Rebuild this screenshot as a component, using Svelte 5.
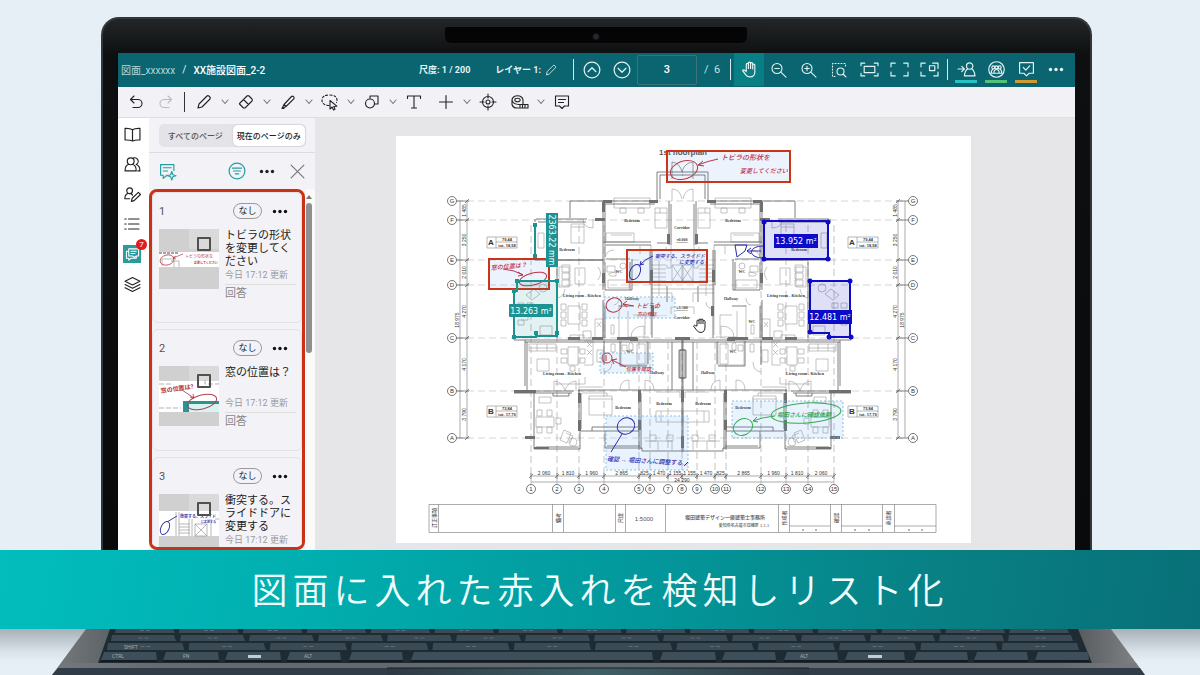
<script lang="ts">
  const comments = [
    { id: 1, title: 'トビラの形状を変更してください', date: '今日 17:12 更新', reply: '回答' },
    { id: 2, title: '窓の位置は？', date: '今日 17:12 更新', reply: '回答' },
    { id: 3, title: '衝突する。スライドドアに変更する', date: '今日 17:12 更新', reply: '' }
  ];

  const stroke = {
    undo: 'M6 2 2.500 5.500 6 9M2.500 5.500H10a4 4 0 0 1 0 8H5',
    redo: 'M10 2 13.500 5.500 10 9M13.500 5.500H6a4 4 0 0 0 0 8h5',
    pencil: 'M2 14l1-4 8-8q1-.8 2 .2l.8.8q1 1 .2 2l-8 8z',
    eraser: 'M1.500 9.500 9 2q1-.8 2 0l3 3q.8 1 0 2l-7 7H5.500L1.500 10zM5.500 5.500l5 5',
    marker: 'M4 10.500l7.500-8q1-.8 1.800 0l.5.5q.8 1 0 1.800L6 12.500zM4 10.500l-2 4 4-2M2 14.500h2',
    shape: 'M6 5V2h8v8h-3M10.500 9.500a4.500 4.500 0 1 1-9 0 4.500 4.500 0 0 1 9 0z',
    text: 'M1.500 4.500V2h13v2.500M8 2v12M5.500 14h5',
    plus: 'M8 1.500v13M1.500 8h13',
    target: 'M13.500 8a5.500 5.500 0 1 1-11 0 5.500 5.500 0 0 1 11 0zM10 8a2 2 0 1 1-4 0 2 2 0 0 1 4 0zM8 0v4M8 12v4M0 8h4M12 8h4',
    tape: 'M0 6a5.500 4.200 0 0 1 11 0v4.500M0 6v4.500q1 3.500 5 3.500h11v-3.500H7Q1 10.500 0 6M2.800 6a2.700 1.800 0 1 0 5.400 0 2.700 1.800 0 1 0-5.400 0M8 11v2M10.500 11v2M13 11v2',
    comment: 'M1.500 2h13v10h-4L8 14.500 5.500 12h-4zM4.500 5.500h7M4.500 8.500h5',
    up: 'M15 8A7 7 0 1 1 1 8a7 7 0 0 1 14 0zM4.500 9.500 8 6l3.500 3.500',
    down: 'M15 8A7 7 0 1 1 1 8a7 7 0 0 1 14 0zM4.500 6.500 8 10l3.500-3.500',
    hand: 'M5 9V3.200a1 1 0 0 1 2 0V7M7 7V2a1 1 0 0 1 2 0v5M9 7V2.500a1 1 0 0 1 2 0V7.500M11 7V4a1 1 0 0 1 2 0v6q0 5-4.500 5-2.500 0-4-2L1.500 9q.8-1.200 2-.3L5 10',
    zoomout: 'M11 6.500a5 5 0 1 1-10 0 5 5 0 0 1 10 0zM9.800 10.200 15 15.200M3.800 6.500h4.500',
    zoomin: 'M11 6.500a5 5 0 1 1-10 0 5 5 0 0 1 10 0zM9.800 10.200 15 15.200M3.800 6.500h4.500M6 4.200v4.500',
    fit: 'M0 4.500V2h3.500M12.500 2H16v2.500M16 11.500V14h-3.500M3.500 14H0v-2.500M3 5h10v6H3z',
    full: 'M0 5.500V2h4M12 2h4v3.500M16 10.500V14h-4M4 14H0v-3.500',
    window: 'M0 5.500V2h4M16 10.500V14h-4M4 14H0v-3.500M8 4.500h5V9H8zM11 2h5v5',
    enter: 'M14 4.800a3 3 0 1 1-6 0 3 3 0 0 1 6 0zM9 7.500Q6.500 9 6 14h10q-.5-5-3-6.500M0 7.500h5.500M3.500 5l2.500 2.500L3.500 10',
    check: 'M1.500 1.500h13v10h-4L8 14 5.500 11.500h-4zM5 6l2.300 2.500L11 4.500',
    book: 'M8 3.500Q6 2 1 2.200v11Q6 13 8 14.200q2-1.200 7-1v-11Q10 2 8 3.500zv10.500',
    users: 'M9.500 5a3.200 3.200 0 1 1-6.400 0 3.200 3.200 0 0 1 6.400 0zM4 8Q1 9 1 14h10.500q0-5-3-6M8.500 2a3.200 3.200 0 1 1 3 6Q15 9 15 14h-2',
    userpen: 'M8 4.500a2.700 2.700 0 1 1-5.400 0 2.700 2.700 0 0 1 5.400 0zM3.500 7Q.8 8 .8 12h4.500M7 7.500l1 1M7 14.500l.7-3L13.500 6l2 2-6 5.800z',
    list: 'M4.500 3H15M4.500 8H15M4.500 13H15M.8 3h1.400M.8 8h1.400M.8 13h1.400',
    layers: 'M8 1.500 15 5 8 8.500 1 5zM1 8l7 3.500L15 8M1 11l7 3.500 7-3.500',
    chat: 'M3 4.500H1.500V12H4v2l2.500-2H12v-1.500M4 2h10.500v7.500H12L10 11 8 9.500H4zM6.500 4.500h5.500M6.500 7h4',
    spark: 'M14 7V1.500H1.500v10H4v3L7.500 11.500M4 4.500h7.500M4 7.500h4M12 8l1 3 3 1-3 1-1 3-1-3-3-1 3-1z',
    filter: 'M15 8A7 7 0 1 1 1 8a7 7 0 0 1 14 0zM4 5.500h8M5 8h6M6.500 10.500h3',
    close: 'M2 2l12 12M14 2 2 14'
  };

  const axisRows = [
    { n: 'G', y: 201 }, { n: 'F', y: 220 }, { n: 'E', y: 260 }, { n: 'D', y: 285 },
    { n: 'C', y: 338 }, { n: 'B', y: 391 }, { n: 'A', y: 438 }
  ];
  const rowDims = ['1 485', '3 250', '2 010', '4 270', '4 170', '3 790'];
  const axisCols = [531, 557, 579, 604, 639, 650, 668, 682, 697, 715, 726, 761, 786, 808, 834];
  const colDims = ['2 060', '1 810', '1 960', '2 865', '825', '1 470', '1 155', '1 155', '1 470', '825', '2 865', '1 960', '1 810', '2 060'];
  const mid = (list: number[], i: number) => (list[i] + list[i + 1]) / 2;

  const roomNames = [
    ['Bedroom', 632, 222], ['Bedroom', 567, 251], ['Living room - Kitchen', 582, 297], ['WC', 619, 273],
    ['Corridor', 682, 229], ['Corridor', 682, 319], ['Hallway', 632, 300], ['Bedroom', 733, 222], ['Bedroom', 799, 251],
    ['WC', 742, 273], ['Hallway', 731, 300], ['Living room - Kitchen', 786, 297], ['WC', 752, 323],
    ['Living room - Kitchen', 562, 375], ['Living room - Kitchen', 805, 375], ['Hallway', 657, 374], ['Hallway', 708, 374],
    ['Bedroom', 623, 409], ['Bedroom', 664, 405], ['Bedroom', 703, 405], ['Bedroom', 743, 409], ['WC', 630, 353], ['WC', 733, 353]
  ];
  const infoBoxes = [
    { n: 'A', x: 487, y: 237, a: '79,44', b: 'tot. 18,58' }, { n: 'A', x: 848, y: 237, a: '79,44', b: 'tot. 18,58' },
    { n: 'B', x: 487, y: 406, a: '73,84', b: 'tot. 17,79' }, { n: 'B', x: 848, y: 406, a: '73,84', b: 'tot. 17,79' }
  ];

  // Keyboard rows: top edge, height, left and right end, number of keys
  const keyRows = [
    { y: 628, h: 5, x0: 116, x1: 1074, n: 15 },
    { y: 635, h: 6, x0: 112, x1: 1078, n: 14 },
    { y: 643, h: 7, x0: 108, x1: 1084, n: 12 }
  ];
  const bottomKeys = [[104, 52], [166, 52], [228, 52], [290, 50], [352, 50], [414, 238], [663, 52], [725, 50], [787, 50], [848, 56], [917, 50], [977, 50], [1038, 50]];
</script>

{#snippet icon(d: string, size: number)}
  <svg class="ic" width={size} height={size} viewBox="0 0 16 16" aria-hidden="true"><path {d} /></svg>
{/snippet}
{#snippet tool(d: string, label: string, menu: boolean)}
  <button class="tool" aria-label={label}>{@render icon(d, 16)}</button>
  {#if menu}
    <button class="chev" aria-label="{label}のメニュー">
      <svg class="ic" width="8" height="6" viewBox="0 0 8 6" aria-hidden="true"><path d="M1 1l3 3.500L7 1" /></svg>
    </button>
  {/if}
{/snippet}
{#snippet dots(size: number)}
  <svg class="dots" width={size} height="5" viewBox="0 0 15 5" aria-hidden="true">
    <circle cx="2" cy="2.500" r="1.700" /><circle cx="7.500" cy="2.500" r="1.700" /><circle cx="13" cy="2.500" r="1.700" />
  </svg>
{/snippet}

<main class="stage">
  <div class="lid">
    <div class="camera"></div>
    <div class="screen">
      <header class="topbar">
        <nav class="crumbs"><a href="#folder">図面_xxxxxx</a><span>/</span><strong>XX施設図面_2-2</strong></nav>
        <span class="meta scale">尺度: 1 / 200</span>
        <span class="meta layer">レイヤー 1:</span>
        <button class="edit" aria-label="レイヤー名を編集">{@render icon(stroke.pencil, 12)}</button>
        <i class="rule"></i>
        <button class="top" aria-label="前のページ">{@render icon(stroke.up, 18)}</button>
        <button class="top" aria-label="次のページ">{@render icon(stroke.down, 18)}</button>
        <input class="page" aria-label="ページ番号" value="3" />
        <span class="total">/&nbsp; 6</span>
        <i class="rule"></i>
        <button class="top active" aria-label="手のひら">{@render icon(stroke.hand, 17)}</button>
        <button class="top" aria-label="縮小">{@render icon(stroke.zoomout, 16)}</button>
        <button class="top" aria-label="拡大">{@render icon(stroke.zoomin, 16)}</button>
        <button class="top" aria-label="範囲を拡大">
          <svg class="ic" width="16" height="16" viewBox="0 0 16 16" aria-hidden="true">
            <path stroke-dasharray="1 2" d="M4 14.500H1.500V1.500h13V5" />
            <path d="M13 9.500a3.500 3.500 0 1 1-7 0 3.500 3.500 0 0 1 7 0zM12 12l3 3" />
          </svg>
        </button>
        <button class="top" aria-label="幅に合わせる">{@render icon(stroke.fit, 17)}</button>
        <button class="top" aria-label="全画面">{@render icon(stroke.full, 17)}</button>
        <button class="top" aria-label="別ウィンドウ">{@render icon(stroke.window, 17)}</button>
        <i class="rule"></i>
        <button class="top mark cyan" aria-label="参加">{@render icon(stroke.enter, 17)}</button>
        <button class="top mark green" aria-label="メンバー">
          <svg class="ic" width="17" height="17" viewBox="0 0 16 16" aria-hidden="true">
            <circle cx="8" cy="8" r="7.300" />
            <path d="M3 11.500q0-3 1.500-3.500M13 11.500q0-3-1.500-3.500M5.500 11.500q0-3.500 2.500-3.500t2.500 3.500zM3 11.500h10" />
            <circle cx="5" cy="6" r="1.400" /><circle cx="8" cy="6" r="1.400" /><circle cx="11" cy="6" r="1.400" />
          </svg>
        </button>
        <button class="top mark amber" aria-label="確認">{@render icon(stroke.check, 17)}</button>
        <button class="top" aria-label="その他">{@render dots(16)}</button>
      </header>

      <div class="tools">
        <div class="history">
          <button class="tool" aria-label="元に戻す">{@render icon(stroke.undo, 16)}</button>
          <button class="tool off" aria-label="やり直す">{@render icon(stroke.redo, 16)}</button>
        </div>
        <i class="rule"></i>
        {@render tool(stroke.pencil, 'ペン', true)}
        {@render tool(stroke.eraser, '消しゴム', true)}
        {@render tool(stroke.marker, 'マーカー', true)}
        <button class="tool" aria-label="選択">
          <svg class="ic" width="18" height="17" viewBox="0 0 18 17" aria-hidden="true">
            <path stroke-dasharray="2 2" d="M8 11.500Q1 11 1 6.300 1 1 8.500 1 16 1 16 6.500q0 1-.5 2" />
            <path d="M9 6.500V15l2.200-2 1.300 3 1.500-.7-1.200-2.800 3-.3z" />
          </svg>
        </button>
        <button class="chev" aria-label="選択のメニュー">
          <svg class="ic" width="8" height="6" viewBox="0 0 8 6" aria-hidden="true"><path d="M1 1l3 3.500L7 1" /></svg>
        </button>
        {@render tool(stroke.shape, '図形', true)}
        {@render tool(stroke.text, 'テキスト', false)}
        <i class="gap"></i>
        {@render tool(stroke.plus, '追加', true)}
        {@render tool(stroke.target, '位置', false)}
        <i class="gap"></i>
        {@render tool(stroke.tape, '計測', true)}
        {@render tool(stroke.comment, 'コメント', false)}
      </div>

      <div class="work">
        <nav class="rail">
          <button aria-label="ページ">{@render icon(stroke.book, 17)}</button>
          <button aria-label="メンバー">{@render icon(stroke.users, 17)}</button>
          <button aria-label="編集者">{@render icon(stroke.userpen, 17)}</button>
          <button aria-label="一覧">{@render icon(stroke.list, 16)}</button>
          <button aria-label="コメント"><span class="on">{@render icon(stroke.chat, 15)}<b>7</b></span></button>
          <button aria-label="レイヤー">{@render icon(stroke.layers, 17)}</button>
        </nav>

        <aside class="panel">
          <div class="tabs">
            <div class="segment"><button>すべてのページ</button><button class="sel">現在のページのみ</button></div>
          </div>
          <div class="actions">
            <button class="teal" aria-label="コメントを追加">{@render icon(stroke.spark, 17)}</button>
            <span class="grow"></span>
            <button class="teal" aria-label="絞り込み">{@render icon(stroke.filter, 18)}</button>
            <button aria-label="その他">{@render dots(16)}</button>
            <button class="close" aria-label="閉じる">{@render icon(stroke.close, 17)}</button>
          </div>
          <div class="listwrap">
            <div class="list">
              {#each comments as c (c.id)}
                <article>
                  <div class="head"><span class="num">{c.id}</span><span class="pill">なし</span><button aria-label="コメント{c.id}の操作">{@render dots(16)}</button></div>
                  <div class="body">
                    <div class="thumb">
                      <svg viewBox="0 0 60 60" aria-hidden="true">
                        <rect width="60" height="60" fill="#d0d0d1" /><path d="M30 0h30v20H30z" fill="#dadadb" />
                        {#if c.id === 1}
                          <path d="M0 23h60v15H0z" fill="#fff" />
                          <path d="M0 24h20" stroke="#888" stroke-dasharray="3 1" stroke-width="1.500" />
                          <path d="M3 37v-7h12v-3M12 32h8v6M15 32v6" fill="none" stroke="#aaa" stroke-width=".8" />
                          <ellipse cx="8" cy="31" rx="7" ry="5" fill="none" stroke="#b5424f" stroke-width=".8" transform="rotate(-15 8 31)" />
                          <path d="M14 29l10-4M14 29l3-2M14 29l3 1" stroke="#b5424f" stroke-width=".7" />
                          <text x="26" y="29" font-size="4" fill="#bb3f48">トビラの形状を</text>
                          <text x="35" y="35" font-size="3" font-weight="700" fill="#bb3f48">変更してください</text>
                        {:else if c.id === 2}
                          <path d="M0 15h60v31H0z" fill="#fff" />
                          <path d="M0 18h14M0 42h22M46 14v4h14v-3" stroke="#aaa" stroke-width=".9" fill="none" stroke-dasharray="5 2" />
                          <path d="M29 37h31v9H29z" fill="#d9f2f2" /><path d="M24 35h36v3H30v8h-6z" fill="#2a9493" />
                          <text x="2" y="27" font-size="6" font-weight="700" fill="#b82f3b" transform="rotate(-8 2 27)">窓の位置は?</text>
                          <ellipse cx="43" cy="36" rx="15" ry="7" fill="none" stroke="#b5424f" transform="rotate(-15 43 36)" />
                          <path d="M23 24l12 8M35 32l-4-1M35 32l-1-4" stroke="#b5424f" stroke-width=".9" />
                        {:else}
                          <path d="M0 17h60v25H0z" fill="#fff" />
                          <path d="M17 18v24M20 18v24M30 25v17M33 25v17M20 30h11M20 33h11M20 36h11M20 39h11M36 30h12v12H36zM36 30l12 12M48 30 36 42M52 25v17M56 25h4" fill="none" stroke="#999" stroke-width=".7" />
                          <ellipse cx="6" cy="34" rx="4" ry="7" fill="none" stroke="#3d3aa5" transform="rotate(25 6 34)" />
                          <path d="M8 28l10-6" stroke="#3d3aa5" />
                          <text x="21" y="24" font-size="4" font-weight="700" fill="#3d3aa5">衝突する、スライド</text>
                          <text x="42" y="29" font-size="3" font-weight="700" fill="#3d3aa5">に変更する</text>
                        {/if}
                      </svg>
                      <input type="checkbox" aria-label="コメント{c.id}を選択" />
                    </div>
                    <div class="txt">
                      <p>{c.title}</p><time>{c.date}</time>
                      {#if c.reply}<a href="#reply{c.id}">{c.reply}</a>{/if}
                    </div>
                  </div>
                </article>
              {/each}
            </div>
            <div class="scroll"><i class="arrow"></i><i class="thumbbar"></i></div>
          </div>
        </aside>

        <section class="canvas">
          <svg class="paper" viewBox="396 136 575 407" role="img" aria-label="1st floorplan">
            <defs>
              <g id="half" fill="none" stroke="#606060" stroke-width=".8">
                <g stroke="#9a9a9a" stroke-width=".6">
                  <path d="M571 224h13v19h-13zM571 227h13M538 233h6v15h-6zM570 338v-3h14v3M585 377v7h-30" />
                  <path d="M559 267h10v20h-10zM562 265h8v7h-8zM562 273h8v6h-8zM562 280h8v6h-8zM575 268h10v16h-10z" />
                  <path d="M568 306h12v18h-12zM561 304h5v6h-5zM561 312h5v6h-5zM561 320h5v6h-5zM582 304h5v6h-5zM582 312h5v6h-5zM582 320h5v6h-5z" />
                  <path d="M595 319h8v19h-8zM597 322l4 5M601 322l-4 5M583 331h8v7h-8zM598 267q5 6 0 13" />
                  <path d="M606 233h28v9h-28zM611 235h21M655 208h12v20h-12zM655 213h12M660 208v5M620 208h6v5h-6zM638 208h6v5h-6zM614 198h36v10h-36z" />
                  <path d="M607 266h8v6h-8zM608 280h21v8h-21zM611 273q-5 1 0 3h5v-4z" /><circle cx="623" cy="266" r="3" />
                  <path d="M628 311v26h21M633 315h12v20M619 305v33M604 305v33M611 325h3v9h-3z" />
                  <path d="M529 344h27v7h-27zM529 348h27M537 344v7M547 344v7M537 359h12v12h-12zM568 347h10v18h-10zM561 349h6v5h-6zM561 358h6v5h-6zM580 349h5v5h-5zM580 358h5v5h-5zM570 366h5v5h-5z" />
                  <path d="M584 341h9v24h-9M587 342l5 5M592 342l-5 5M587 350l5 5M592 350l-5 5M597 350h6v12h-6z" />
                  <path d="M621 341v24h26v-24M637 344h8v20h-8zM622 345h5v6h-5zM629 344q1-3 4 0v6h-4zM611 344h4v8h-4z" />
                  <path d="M589 396h23v19h-23zM582 393h25v3M588 399h25M539 397h12v6h-12zM536 417h18v10h-18zM537 410h5v6h-5zM547 410h5v6h-5zM537 427h5v6h-5zM547 427h5v6h-5zM556 418h5v6h-5z" />
                  <path d="M564 430l7 3-4 10-7-3zM566 433l7 3-3 7" /><circle cx="573" cy="442" r="4" />
                  <path d="M656 411h26v11h-26zM661 411v11M656 392h24v6M645 441h27v9M658 441v9M650 435h6v6h-6zM667 435h6v6h-6zM605 391h-26v-4h24" />
                  <path d="M521 320h7v-6M518 303h6v5h-6zM527 303h6v5h-6zM518 320h6v5h-6zM540 326h12v9h-12z" />
                  <path d="M526 295l8-6 6 5-8 6z" /><circle cx="543" cy="288" r="4" />
                  <path d="M583 219q0 9 10 9v-9M604 262q1-12 10-12M557 298q7-1 8-9M631 338q0-12 13-12v12M651 308q7 2 8-6M604 372q8-1 8-10M620 390q0-10 9-10v10M645 390v-10q9 1 9 10" />
                  <path d="M554 391v-10q9 1 11 10q2-9 11-10v10M672 201v-12q8 0 10 10M640 246v8M614 305q5-1 5-7" />
                  <path d="M651 245v90M671 245v23h-4v-3M666 250v-3M651 265h15M651 269h15M651 273h15M651 277h15M651 281h15M651 285h15M651 289h15M651 293h15M659 261v35M672 265h11v16h-11zM672 265l11 16M672 281l11-16" />
                  <path d="M667 289h16M667 293h5v9M682 307h-11v7" />
                </g>
                <path d="M657 201v-29h26M660 199v-24h23M570 218v-17h87M604 204h51M536 219h51M535 219v3M538 222h48M535 258v2h68M603 201v57M605 204v53M557 262v76M557 260h46M603 242h48M606 245h45M657 243h13M669 201v44M671 204v41" />
                <path d="M603 258v32M605 262v28M630 262v28M605 290h27M632 259v31M606 259h24M650 250v35M652 250v88M667 286v16M603 300v38M605 306v32M619 306h14M514 337v3h169M525 342h158" />
                <path d="M527 342v49M525 340v46M514 391h60M514 393h58M553 393v3h16v-3M534 393v56h46v-18M536 447h42M579 390v40M581 393v36M581 431h58M592 427h47M592 431v-4M578 390h104M639 390v60M641 393v56M605 431v17h37v3h40M607 446h33" />
                <path d="M604 341v24M620 341v25h27M648 342v22M672 342v48M680 350h6v28h-6zM682 340v112" />
                <g fill="#707070" stroke="none">
                  <path d="M603 200h9v3h-9zM649 200h9v3h-9zM595 218h10v3h-10zM568 337h12v3h-12zM592 337h11v3h-11zM617 337h20v3h-20zM602 202h3v10h-3zM667 234h3v10h-3zM602 273h3v10h-3zM650 270h3v12h-3zM630 338h8v3h-8zM651 306h3v10h-3zM514 390h22v3h-22zM578 393h3v10h-3zM578 420h3v11h-3zM638 390h3v12h-3zM638 420h3v10h-3zM681 390h3v12h-3zM681 436h3v12h-3zM525 436h10v3h-10zM534 449h15v-2h-15zM680 337h10v3h-10z" />
                </g>
              </g>
            </defs>

            <rect x="396" y="136" width="575" height="407" fill="#fff" />
            <g fill="none" stroke="#aaa" stroke-width=".7">
              <g stroke-dasharray="7 4">
                {#each axisRows as r}<path d="M456 {r.y}H908" stroke="#c4c4c4" />{/each}
                {#each axisCols as x, i}<path d="M{x} {i < 4 || i > 10 ? 225 : 342}V484" />{/each}
              </g>
              <path d="M460 201V438M467 201V438M898 201V438M905 201V438M531 476H834M531 482H834" stroke="#888" />
              {#each axisRows as r}
                <path d="M465 {r.y + 2}l4-4M896 {r.y + 2}l4-4M457 {r.y}h12M896 {r.y}h12" stroke="#555" />
              {/each}
              {#each axisCols as x}<path d="M{x - 2} 478l4-4M{x} 473v6" stroke="#555" />{/each}
            </g>
            <use href="#half" />
            <use href="#half" transform="translate(1365 0) scale(-1 1)" />

            <g class="axis">
              {#each axisRows as r}
                {#each [452, 913] as x}
                  <circle cx={x} cy={r.y} r="4.500" /><text {x} y={r.y + 2}>{r.n}</text>
                {/each}
              {/each}
              {#each axisCols as x, i}<circle cx={x} cy="489" r="4.500" /><text {x} y="491">{i + 1}</text>{/each}
            </g>
            <g class="dim">
              {#each rowDims as d, i}
                {@const y = (axisRows[i].y + axisRows[i + 1].y) / 2}
                <text transform="translate(466 {y}) rotate(-90)">{d}</text>
                <text transform="translate(897 {y}) rotate(-90)">{d}</text>
              {/each}
              <text transform="translate(459 320) rotate(-90)">18 975</text>
              <text transform="translate(904 320) rotate(-90)">18 975</text>
              {#each colDims as d, i}<text x={mid(axisCols, i)} y="475">{d}</text>{/each}
              <text x="682" y="482">24 290</text>
            </g>
            <g class="room">
              {#each roomNames as [n, x, y]}<text {x} {y}>{n}</text>{/each}
              <text x="682" y="241" text-decoration="underline">±0.000</text>
              <text x="682" y="309" text-decoration="underline">+1.500</text>
            </g>
            {#each infoBoxes as b}
              <g class="info">
                <path d="M{b.x} {b.y}h30v11h-30zM{b.x + 9} {b.y}v11M{b.x + 9} {b.y + 5}h21" />
                <text x={b.x + 4} y={b.y + 8} class="big">{b.n}</text>
                <text x={b.x + 20} y={b.y + 4}>{b.a}</text><text x={b.x + 20} y={b.y + 10}>{b.b}</text>
              </g>
            {/each}
            <text x="683" y="155" class="planname">1st floorplan</text>

            <g class="selection">
              <path d="M604 297h71v21h-71zM600 353h53v20h-53zM606 416h82v54h-82zM732 401h111v37H732z" />
            </g>
            <g class="redbox">
              <rect x="667" y="151" width="123" height="31" />
              <rect x="489" y="259" width="60" height="30" />
              <rect x="627" y="250" width="80" height="32" />
            </g>
            <g class="ink red">
              <ellipse cx="684" cy="170" rx="14" ry="9" transform="rotate(-18 684 170)" />
              <path d="M718 159q-10 2-20 6M698 165l5-4M698 165l6 1" />
              <path d="M672 179v-17q8 1 10 10q2-9 11-10v17" stroke="#777" stroke-width=".7" />
              <path d="M503 269q12 1 20 6M523 275l-5-3M523 275l-5 1" />
              <ellipse cx="533" cy="279" rx="14" ry="6" transform="rotate(-15 533 279)" />
              <ellipse cx="614" cy="305" rx="8" ry="7" transform="rotate(-20 614 305)" />
              <path d="M634 306l-11-2M623 304l4-3M623 304l4 3" />
              <ellipse cx="607" cy="358" rx="5" ry="5" /><path d="M606 355v6M626 367l-14-7M612 360l5-1M612 360l2 4" />
              <text x="721" y="160" font-size="7">トビラの形状を</text>
              <text x="740" y="173" font-size="6">変更してください</text>
              <text x="491" y="270" font-size="6" transform="rotate(-5 491 270)">窓の位置は？</text>
              <text x="636" y="308" font-size="6">トビラの</text>
              <text x="637" y="316" font-size="5">方向修正……</text>
              <text x="626" y="371" font-size="5">位置を確認</text>
            </g>
            <g class="ink blue">
              <ellipse cx="635" cy="272" rx="5" ry="8" transform="rotate(25 635 272)" /><path d="M653 256q-8 3-13 9M640 265l1-4M640 265l4-1" />
              <text x="655" y="258" font-size="5">衝突する、スライドド</text>
              <text x="679" y="264" font-size="5">に変更する</text>
              <ellipse cx="626" cy="426" rx="9" ry="8" transform="rotate(-30 626 426)" /><path d="M622 434l-11 18" />
              <text x="607" y="461" font-size="6" transform="rotate(3 607 461)">確認 → 堀田さんに調整する…</text>
              <path d="M735 245h12l-2 6-8 6zM761 251h-14M747 251l4-3M747 251l4 3M763 246q-10 0-12 6 2 6 12 6M684 466l4-4" />
            </g>
            <g class="ink green">
              <ellipse cx="806" cy="413" rx="35" ry="10" transform="rotate(-4 806 413)" />
              <ellipse cx="743" cy="427" rx="10" ry="8" transform="rotate(-25 743 427)" />
              <path d="M775 416q-12 1-22 5M753 421l4-4M753 421l5 1" />
              <text x="777" y="417" font-size="6">堀田さんに確認依頼</text>
            </g>

            <g class="measure tealm">
              <path d="M517 281h40v55h-21v1h-22v-46h3z" /><path d="M535 225v31" />
              {#each [[517, 281], [557, 281], [514, 291], [514, 337], [536, 333], [557, 333], [535, 225], [535, 256]] as [x, y]}<rect x={x - 2} y={y - 2} width="4" height="4" />{/each}
              <rect x="509" y="304" width="44" height="13" rx="1" /><text x="531" y="314">13.263 m²</text>
              <rect x="546" y="213" width="12" height="54" /><text transform="translate(549 240) rotate(90)">2363.22 mm</text>
            </g>
            <g class="measure bluem">
              <path d="M764 221h64v38h-64z" /><path d="M810 281h40v56h-21v-4h-19z" />
              {#each [[764, 222], [828, 222], [764, 259], [828, 259], [810, 281], [850, 281], [851, 337], [829, 337], [810, 332]] as [x, y]}<circle cx={x} cy={y} r="2.500" />{/each}
              <rect x="774" y="234" width="44" height="14" /><text x="796" y="244">13.952 m²</text>
              <rect x="808" y="310" width="44" height="14" /><text x="830" y="320">12.481 m²</text>
            </g>

            <path class="cursor" transform="translate(692 317)" d="M5 9V4a1 1 0 0 1 2 0V3a1 1 0 0 1 2 0 1 1 0 0 1 2 0v1a1 1 0 0 1 2 1v5q0 5-4 5.500-3 0-4.500-2.500L1.500 9q.8-1.500 2-.3zM7 4v3M9 3v4M11 4v3" />

            <g class="block">
              <path d="M429 504.500H936V532.500H429zM438.500 504v28M552.500 504v28M563.500 504v28M615.500 504v28M625.500 504v28M665.500 504v28M778.500 504v28M789.500 504v28M830.500 504v28M841.500 504v28M882.500 504v28M894.500 504v28M789 526h41M841 526h41M894 526h42" />
              <text class="side" transform="translate(436 518) rotate(-90)">訂正事項</text>
              <text class="side" transform="translate(560 518) rotate(-90)">備考</text>
              <text class="side" transform="translate(622 518) rotate(-90)">尺度</text>
              <text class="side" transform="translate(786 518) rotate(-90)">作成者</text>
              <text class="side" transform="translate(838 518) rotate(-90)">確認</text>
              <text class="side" transform="translate(890 518) rotate(-90)">承認者</text>
              <text x="644" y="521" class="ratio">1:5000</text>
              <text x="725" y="519" class="firm">堀田建築デザイン一級建築士事務所</text>
              <text x="744" y="527">愛知県名古屋市瑞穂区 1-1-1</text>
              {#each [803, 816, 855, 869, 909, 922] as cx}<circle {cx} cy="530" r=".7" />{/each}
            </g>
          </svg>
        </section>
      </div>
    </div>
  </div>

  <h1 class="banner">図面に入れた赤入れを検知しリスト化</h1>

  <svg class="deck" viewBox="0 629 1200 46" preserveAspectRatio="none" aria-hidden="true">
    <defs>
      <linearGradient id="shade" x2="0" y2="1"><stop offset="0" stop-color="#a7b1b7" /><stop offset=".7" stop-color="#dbe3e9" /><stop offset="1" stop-color="#e6eef6" /></linearGradient>
      <linearGradient id="metal"><stop offset="0" stop-color="#777b7e" /><stop offset=".1" stop-color="#474d52" /><stop offset=".5" stop-color="#39434b" /><stop offset=".92" stop-color="#4a4e50" /><stop offset="1" stop-color="#85888a" /></linearGradient>
      <linearGradient id="pad"><stop offset="0" stop-color="#2d3944" /><stop offset=".5" stop-color="#3f5f66" /><stop offset="1" stop-color="#2d3944" /></linearGradient>
    </defs>
    <rect y="629" width="1200" height="46" fill="#e6eef6" />
    <path d="M0 629h1200v33H0z" fill="url(#shade)" />
    <path d="M86 629H1111L1145 675H52z" fill="url(#metal)" />
    <path d="M110 629H1078L1092 663H98z" fill="#1f2b33" />
    {#each keyRows as r}
      {@const w = (r.x1 - r.x0) / r.n}
      {#each Array(r.n) as _, i}
        <path d="M{r.x0 + i * w} {r.y}h{w - 7}l2 {r.h}h-{w - 4}z" fill="#3a4b56" />
        <path d="M{r.x0 + i * w + w / 2 - 8} {r.y + r.h / 2}h12" stroke="#82909a" stroke-opacity=".5" stroke-dasharray="4 2" />
      {/each}
    {/each}
    {#each bottomKeys as [x, w]}
      <path d="M{x} 652h{w}l1 8h-{w + 4}z" fill="#3d4f5a" /><path d="M{x - 3} 660h{w + 4}v2h-{w + 4}z" fill="#131b21" />
    {/each}
    <g fill="#a2adb5" font-family="Roboto, sans-serif" font-size="5">
      <text x="112" y="658">CTRL</text><text x="183" y="658">FN</text><text x="304" y="658">ALT</text><text x="800" y="658">ALT</text><text x="124" y="649">SHIFT</text>
    </g>
    <path d="M248 655h13v3h-13zM868 655h14v3h-14z" fill="#c5cdd2" />
    <path d="M62 663H1136L1140 669H58z" fill="#73777b" fill-opacity=".7" />
    <path d="M58 668H1140L1145 675H52z" fill="#303c48" />
    <path d="M387 668H809V675H387z" fill="url(#pad)" /><path d="M387 668h422" stroke="#16202a" />
  </svg>
</main>

<style>
  :global(body) { margin: 0; }
  .stage {
    height: 100vh; display: grid; grid-template-rows: minmax(0, 1fr) auto auto; overflow: hidden;
    background: #e6eef6; color: #222;
    font-family: Roboto, "Noto Sans CJK JP", sans-serif; font-size: 9px;
  }
  button { border: 0; padding: 0; margin: 0; background: none; color: inherit; font: inherit; display: flex; align-items: center; justify-content: center; flex: none; }
  a { color: inherit; text-decoration: none; }
  .ic { display: block; fill: none; stroke: currentColor; stroke-width: 1.1; stroke-linecap: round; stroke-linejoin: round; overflow: visible; }
  .dots { fill: currentColor; display: block; }

  .lid {
    margin: 17px 108px 0 101px; padding: 10px 15px 0 14px;
    display: flex; flex-direction: column; min-height: 0;
    border: solid #34373a; border-width: 2px 2px 0; border-radius: 18px 18px 0 0;
    background: linear-gradient(#232628, #0d0f10 36px, #090a0b);
  }
  .camera { width: 302px; height: 16px; margin: -2px auto 10px; border-radius: 2px 2px 6px 6px; background: radial-gradient(circle at 50% 60%, #26282b 0 2px, #050506 4px); flex: none; }
  .screen { flex: 1; min-height: 0; display: flex; flex-direction: column; background: #f2f1f6; border-left: 1px solid #0a0a0b; }

  .topbar { height: 34px; box-sizing: border-box; flex: none; display: flex; align-items: center; padding: 0 4px 1px 3px; background: #0a6570; color: #e4f3f4; }
  .crumbs { flex: 1; display: flex; align-items: center; gap: 7px; font-size: 10px; white-space: nowrap; }
  .crumbs a { color: #b5d8dc; }
  .crumbs strong { font-weight: 500; color: #fff; }
  .meta { font-weight: 700; white-space: nowrap; }
  .scale { margin-right: 25px; }
  .edit { width: 20px; height: 30px; }
  .topbar .rule { width: 1px; height: 21px; margin: 0 3px; background: #d5e9eb; }
  .edit + .rule { margin-left: 12px; }
  .top { width: 30px; height: 33px; }
  .active { background: #087f84; }
  .page { width: 60px; height: 30px; box-sizing: border-box; border: 1px solid #3c7478; border-radius: 2px; background: none; color: #fff; text-align: center; font: 500 11px Roboto, sans-serif; }
  .total { width: 30px; text-align: center; font-size: 11px; color: #c4e0e3; }
  .mark { position: relative; }
  .mark::after { content: ""; position: absolute; left: 4px; right: 4px; bottom: 3px; height: 3px; background: currentColor; }
  .cyan::after { background: #25c2c5; }
  .green::after { background: #53c27c; }
  .amber::after { background: #d09a2e; }

  .tools { height: 30px; flex: none; display: flex; align-items: center; padding-left: 6px; border-bottom: 1px solid #dedee2; }
  .history { display: flex; gap: 6px; }
  .tools .rule { width: 1px; height: 20px; margin: 0 7px 0 6px; background: #333; }
  .tool { width: 24px; height: 28px; }
  .off { color: #bbb; }
  .chev { width: 18px; height: 28px; color: #777; }
  .gap { width: 8px; }

  .work { flex: 1; min-height: 0; display: flex; }
  .rail { width: 31px; flex: none; background: #fff; padding-top: 1px; box-sizing: border-box; }
  .rail button { width: 28px; height: 30px; }
  .on { position: relative; width: 18px; height: 18px; display: grid; place-items: center; background: #2a9b9a; color: #fff; }
  .on b { position: absolute; top: -6px; right: -6px; width: 11px; height: 11px; border-radius: 50%; background: #e21b1b; font: 8px/11px Roboto, sans-serif; text-align: center; }

  .panel { width: 166px; flex: none; display: flex; flex-direction: column; min-height: 0; background: #f3f2f7; }
  .tabs { padding: 6px 9px 5px 10px; border-bottom: 1px solid #dcdce0; }
  .segment { display: flex; height: 23px; border-radius: 5px; background: #e4e3e7; }
  .segment button { flex: 1; font-size: 8px; white-space: nowrap; color: #555; font-weight: 500; }
  .segment .sel { background: #fff; margin: 1px; border-radius: 5px; color: #222; box-shadow: 0 0 2px #bbb; }
  .actions { height: 36px; flex: none; display: flex; align-items: center; padding: 0 3px; }
  .actions button { width: 30px; height: 30px; }
  .grow { flex: 1; }
  .teal { color: #239f9d; }
  .close { color: #777; }
  .listwrap { flex: 1; min-height: 0; display: flex; }
  .list { width: 156px; box-sizing: border-box; overflow: hidden; border: 3px solid #ca3216; border-radius: 8px; display: flex; flex-direction: column; gap: 6px; }
  article { flex: none; border: 1px solid #e2e1e7; border-radius: 6px; padding: 8px 3px 20px 6px; }
  .head { display: flex; align-items: center; height: 20px; margin-bottom: 8px; color: #555; font-size: 11px; }
  .num { flex: 1; }
  .pill { width: 27px; height: 14px; border: 1px solid #999; border-radius: 8px; font-size: 9px; line-height: 14px; text-align: center; color: #222; }
  .head button { width: 36px; height: 20px; color: #111; }
  .body { display: flex; gap: 6px; }
  .thumb { position: relative; width: 60px; height: 60px; flex: none; }
  .thumb svg { display: block; }
  .thumb input { position: absolute; top: 8px; left: 38px; width: 14px; height: 14px; margin: 0; appearance: none; border: 2px solid #505050; border-radius: 1px; }
  .txt { flex: 1; min-width: 0; }
  .txt p { margin: 0; font-size: 11px; line-height: 13px; min-height: 30px; color: #222; }
  time { display: block; font-size: 9px; line-height: 15px; height: 16px; border-bottom: 1px solid #ddd; margin-right: 2px; color: #999; white-space: nowrap; }
  .txt a { display: block; font-size: 11px; line-height: 17px; color: #888; }
  .scroll { flex: 1; display: flex; flex-direction: column; align-items: center; padding: 6px 2px 0 0; background: #fafafb; }
  .arrow { border: 3px solid transparent; border-top: 0; border-bottom: 4px solid #777; margin-bottom: 4px; }
  .thumbbar { width: 6px; height: 150px; border-radius: 3px; background: #8f8f91; }

  .canvas { flex: 1; min-width: 0; padding: 18px 104px 0 81px; background: #e6e5e8; }
  .paper { display: block; width: 100%; }
  .paper text { font-family: "Liberation Sans", "Noto Sans CJK JP", sans-serif; }
  .axis circle { fill: #fff; stroke: #555; stroke-width: .8; }
  .axis text { font-size: 6px; text-anchor: middle; fill: #333; }
  .dim text { font-size: 5px; text-anchor: middle; fill: #333; }
  .paper .room text { font-family: "Liberation Serif", serif; font-size: 4px; font-weight: 700; text-anchor: middle; fill: #444; }
  .info path { fill: #fff; stroke: #888; stroke-width: .6; }
  .info text { font-size: 4px; font-weight: 700; text-anchor: middle; fill: #333; }
  .info .big { font-size: 8px; }
  .paper .planname { font-size: 8px; font-weight: 700; text-anchor: middle; fill: #555; }
  .selection path { fill: #4a9df5; fill-opacity: .12; stroke: #6fb3dc; stroke-width: .8; stroke-dasharray: 2 2; }
  .redbox rect { fill: #4a88e5; fill-opacity: .1; stroke: #cc3418; stroke-width: 2; }
  .ink { fill: none; stroke-width: 1; }
  .ink text { stroke: none; font-weight: 500; font-style: italic; }
  .red { stroke: #b93643; }
  .red text { fill: #bb2f3d; }
  .blue { stroke: #2a2ab0; }
  .blue text { fill: #2a2ab0; }
  .green { stroke: #30ad4d; }
  .green text { fill: #28a044; }
  .measure path { fill-opacity: .13; stroke-width: 2; }
  .paper .measure text { font-family: "DejaVu Sans", sans-serif; font-size: 8px; fill: #fff; text-anchor: middle; }
  .tealm { fill: #1c9391; }
  .tealm path { stroke: #1c9391; }
  .bluem { fill: #0b0bc8; }
  .bluem path { stroke: #0b0bc8; }
  .cursor { fill: #fff; stroke: #222; stroke-width: 1; }
  .block path { fill: none; stroke: #888; stroke-width: .7; }
  .block text { font-size: 4px; font-weight: 500; text-anchor: middle; fill: #555; }
  .block circle { fill: #333; }
  .block .side { font-size: 5px; }
  .block .ratio { font-size: 6px; font-weight: 400; }
  .block .firm { font-size: 5px; }

  .banner {
    margin: 0; padding-bottom: 3px; box-sizing: border-box; height: 79px; display: flex; align-items: center; justify-content: center;
    background: linear-gradient(100deg, #02bdbd, #01afb0 25%, #03969a 55%, #088084 78%, #087078);
    color: #f2ffff; font: 350 36px/1 "Noto Sans CJK JP", sans-serif; letter-spacing: 5px; white-space: nowrap;
  }
  .deck { display: block; width: 100%; height: 46px; }
</style>
